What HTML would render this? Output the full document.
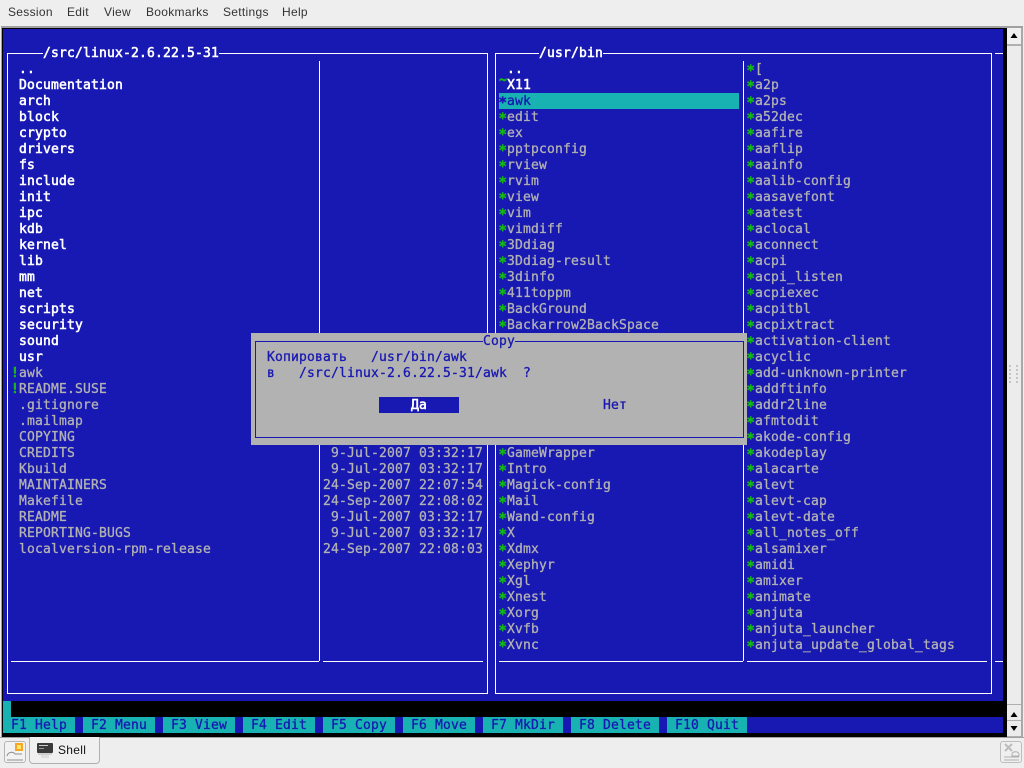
<!DOCTYPE html>
<html><head><meta charset="utf-8"><title>Shell</title>
<style>
html,body{margin:0;padding:0;width:1024px;height:768px;overflow:hidden;background:#eeeeee}
div,pre,svg{position:absolute;margin:0;padding:0}
.m{font:12px/16px "Liberation Sans",sans-serif;color:#333;top:4px;letter-spacing:.3px;white-space:pre}
pre{font-family:"DejaVu Sans Mono","Noto Sans CJK SC",monospace;font-size:13px;line-height:16px;letter-spacing:.174px;white-space:pre;color:#b2b2b2;-webkit-text-stroke:.3px}
.w{color:#fff;-webkit-text-stroke:.55px #fff}
i{font-style:normal;color:#14b814;font-weight:bold;font-size:14px;line-height:10px;letter-spacing:-.43px;position:relative;top:2px;left:-.5px;-webkit-text-stroke:.5px}
b{font-style:normal;color:#14b814;position:relative;-webkit-text-stroke:.6px #14b814}
i.s{color:#1818b2}
.l{background:#fff}
.f{background:#18b2b2;height:16px;top:717px}
.f pre,.dl{color:#1818b2}
</style></head><body>
<div class="m" style="left:8px">Session</div>
<div class="m" style="left:67px">Edit</div>
<div class="m" style="left:104px">View</div>
<div class="m" style="left:146px">Bookmarks</div>
<div class="m" style="left:223px">Settings</div>
<div class="m" style="left:282px">Help</div>

<div style="left:1px;top:26px;width:1022px;height:712px;background:#a0a0a0"></div>
<div style="left:2px;top:28px;width:1005px;height:709px;background:#000"></div>
<div style="left:3px;top:29px;width:1000px;height:672px;background:#1818b2"></div>
<div style="left:3px;top:701px;width:8px;height:16px;background:#18b2b2"></div>
<div style="left:3px;top:717px;width:1000px;height:16px;background:#1818b2"></div>

<!-- left panel frame -->
<div class="l" style="left:7px;top:53px;width:481px;height:1px"></div>
<div class="l" style="left:7px;top:53px;width:1px;height:641px"></div>
<div class="l" style="left:487px;top:53px;width:1px;height:641px"></div>
<div class="l" style="left:7px;top:693px;width:481px;height:1px"></div>
<div class="l" style="left:319px;top:61px;width:1px;height:600px"></div>
<div class="l" style="left:11px;top:661px;width:308px;height:1px"></div>
<div class="l" style="left:323px;top:661px;width:160px;height:1px"></div>
<!-- right panel frame -->
<div class="l" style="left:495px;top:53px;width:497px;height:1px"></div>
<div class="l" style="left:495px;top:53px;width:1px;height:641px"></div>
<div class="l" style="left:991px;top:53px;width:1px;height:641px"></div>
<div class="l" style="left:495px;top:693px;width:497px;height:1px"></div>
<div class="l" style="left:743px;top:61px;width:1px;height:600px"></div>
<div class="l" style="left:499px;top:661px;width:244px;height:1px"></div>
<div class="l" style="left:747px;top:661px;width:240px;height:1px"></div>
<div class="l" style="left:995px;top:53px;width:8px;height:1px"></div>
<div class="l" style="left:995px;top:661px;width:8px;height:1px"></div>

<div style="left:43px;top:45px;width:176px;height:16px;background:#1818b2"></div>
<div style="left:539px;top:45px;width:64px;height:16px;background:#1818b2"></div>
<pre class="w" style="left:43px;top:46px">/src/linux-2.6.22.5-31</pre>
<pre class="w" style="left:539px;top:46px">/usr/bin</pre>

<pre style="left:11px;top:62px"> <span class="w">..
 Documentation
 arch
 block
 crypto
 drivers
 fs
 include
 init
 ipc
 kdb
 kernel
 lib
 mm
 net
 scripts
 security
 sound
 usr</span>
<b>!</b>awk
<b>!</b>README.SUSE
 .gitignore
 .mailmap
 COPYING
 CREDITS
 Kbuild
 MAINTAINERS
 Makefile
 README
 REPORTING-BUGS
 localversion-rpm-release</pre>

<pre style="left:323px;top:446px"> 9-Jul-2007 03:32:17
 9-Jul-2007 03:32:17
24-Sep-2007 22:07:54
24-Sep-2007 22:08:02
 9-Jul-2007 03:32:17
 9-Jul-2007 03:32:17
24-Sep-2007 22:08:03</pre>

<div style="left:499px;top:93px;width:240px;height:16px;background:#18b2b2"></div>
<pre style="left:499px;top:62px"> <span class="w">..</span>
<b style="top:-5px">~</b><span class="w">X11</span>
<i class="s">*</i><span class="dl">awk</span>
<i>*</i>edit
<i>*</i>ex
<i>*</i>pptpconfig
<i>*</i>rview
<i>*</i>rvim
<i>*</i>view
<i>*</i>vim
<i>*</i>vimdiff
<i>*</i>3Ddiag
<i>*</i>3Ddiag-result
<i>*</i>3dinfo
<i>*</i>411toppm
<i>*</i>BackGround
<i>*</i>Backarrow2BackSpace</pre>
<pre style="left:499px;top:446px"><i>*</i>GameWrapper
<i>*</i>Intro
<i>*</i>Magick-config
<i>*</i>Mail
<i>*</i>Wand-config
<i>*</i>X
<i>*</i>Xdmx
<i>*</i>Xephyr
<i>*</i>Xgl
<i>*</i>Xnest
<i>*</i>Xorg
<i>*</i>Xvfb
<i>*</i>Xvnc</pre>

<pre style="left:747px;top:62px"><i>*</i>[
<i>*</i>a2p
<i>*</i>a2ps
<i>*</i>a52dec
<i>*</i>aafire
<i>*</i>aaflip
<i>*</i>aainfo
<i>*</i>aalib-config
<i>*</i>aasavefont
<i>*</i>aatest
<i>*</i>aclocal
<i>*</i>aconnect
<i>*</i>acpi
<i>*</i>acpi_listen
<i>*</i>acpiexec
<i>*</i>acpitbl
<i>*</i>acpixtract
<i>*</i>activation-client
<i>*</i>acyclic
<i>*</i>add-unknown-printer
<i>*</i>addftinfo
<i>*</i>addr2line
<i>*</i>afmtodit
<i>*</i>akode-config
<i>*</i>akodeplay
<i>*</i>alacarte
<i>*</i>alevt
<i>*</i>alevt-cap
<i>*</i>alevt-date
<i>*</i>all_notes_off
<i>*</i>alsamixer
<i>*</i>amidi
<i>*</i>amixer
<i>*</i>animate
<i>*</i>anjuta
<i>*</i>anjuta_launcher
<i>*</i>anjuta_update_global_tags</pre>

<!-- dialog -->
<div style="left:251px;top:333px;width:496px;height:112px;background:#b2b2b2"></div>
<div style="left:255px;top:341px;width:487px;height:95px;border:1px solid #1818b2"></div>
<div style="left:483px;top:333px;width:32px;height:16px;background:#b2b2b2"></div>
<pre class="dl" style="left:483px;top:334px">Copy</pre>
<pre class="dl" style="left:267px;top:350px">Копировать   /usr/bin/awk
в   /src/linux-2.6.22.5-31/awk  ?</pre>
<div style="left:379px;top:397px;width:80px;height:16px;background:#1818b2"></div>
<pre class="w" style="left:411px;top:398px">Да</pre>
<pre class="dl" style="left:603px;top:398px">Нет</pre>

<!-- function keys -->
<div class="f" style="left:3px;width:72px"><pre style="left:8px;top:1px">F1 Help</pre></div>
<div class="f" style="left:83px;width:72px"><pre style="left:8px;top:1px">F2 Menu</pre></div>
<div class="f" style="left:163px;width:72px"><pre style="left:8px;top:1px">F3 View</pre></div>
<div class="f" style="left:243px;width:72px"><pre style="left:8px;top:1px">F4 Edit</pre></div>
<div class="f" style="left:323px;width:72px"><pre style="left:8px;top:1px">F5 Copy</pre></div>
<div class="f" style="left:403px;width:72px"><pre style="left:8px;top:1px">F6 Move</pre></div>
<div class="f" style="left:483px;width:80px"><pre style="left:8px;top:1px">F7 MkDir</pre></div>
<div class="f" style="left:571px;width:88px"><pre style="left:8px;top:1px">F8 Delete</pre></div>
<div class="f" style="left:667px;width:80px"><pre style="left:8px;top:1px">F10 Quit</pre></div>

<!-- scrollbar -->
<div style="left:1007px;top:28px;width:15px;height:709px;background:#ececec"></div>
<div style="left:1021px;top:28px;width:2px;height:709px;background:#a8a8a8"></div>
<div style="left:1007px;top:28px;width:14px;height:16px;background:#f0f0f0;border-bottom:2px solid #b0b0b0"></div>
<svg style="left:1007px;top:30px" width="15" height="10"><path d="M3.5 8h7L7 3z" fill="#000"/></svg>
<div style="left:1007px;top:704px;width:14px;height:1px;background:#b0b0b0"></div>
<div style="left:1007px;top:720px;width:14px;height:1px;background:#b0b0b0"></div>
<div style="left:1007px;top:736px;width:14px;height:1px;background:#b0b0b0"></div>
<svg style="left:1007px;top:706px" width="15" height="30"><path d="M3.5 11h7L7 6z" fill="#000"/><path d="M3.5 20h7L7 25z" fill="#000"/></svg>
<svg style="left:1007px;top:364px" width="15" height="22"><g fill="#c4c4c4"><rect x="2" y="1" width="2" height="2"/><rect x="9" y="1" width="2" height="2"/><rect x="2" y="5" width="2" height="2"/><rect x="9" y="5" width="2" height="2"/><rect x="2" y="9" width="2" height="2"/><rect x="9" y="9" width="2" height="2"/><rect x="2" y="13" width="2" height="2"/><rect x="9" y="13" width="2" height="2"/><rect x="2" y="17" width="2" height="2"/><rect x="9" y="17" width="2" height="2"/></g></svg>

<!-- bottom -->
<div style="left:0;top:738px;width:1024px;height:30px;background:#eeeeee"></div>
<div style="left:0;top:737px;width:1024px;height:1px;background:#a0a0a0"></div>
<div style="left:4px;top:741px;width:20px;height:20px;border:1px solid #b5b5b5;border-radius:3px;background:#f2f2f2"></div>
<svg style="left:5px;top:742px" width="20" height="20"><rect x="10" y="1" width="8" height="8" fill="#f5a623"/><rect x="12" y="3" width="4" height="4" fill="#ffe56a"/><path d="M2 14c1-4 6-5 8-2h7M2 18h16" fill="none" stroke="#8e8e8e"/></svg>
<div style="left:29px;top:737px;width:69px;height:26px;background:#f0f0f0;border:1px solid #b0b0b0;border-top:none;border-radius:0 0 4px 4px"></div>
<svg style="left:37px;top:743px" width="16" height="15"><rect x="0" y="0" width="16" height="10" rx="1" fill="#3a3a3a"/><rect x="2" y="2" width="9" height="1" fill="#ccc"/><rect x="2" y="5" width="5" height="1" fill="#999"/><path d="M1 10h14v2H1z" fill="#cfcfcf"/><path d="M4 12h8v3H4z" fill="#dedede"/></svg>
<div class="m" style="left:58px;top:742px;color:#111">Shell</div>
<div style="left:1000px;top:741px;width:20px;height:20px;border:1px solid #bdbdbd;border-radius:3px;background:#efefef"></div>
<svg style="left:1001px;top:742px" width="20" height="20"><path d="M4 2l7 7M11 2l-7 7" stroke="#bcbcbc" stroke-width="2"/><path d="M3 15h15M3 18h15M11 12c1-3 6-3 7 0v2h-7z" fill="none" stroke="#b0b0b0"/></svg>
</body></html>
